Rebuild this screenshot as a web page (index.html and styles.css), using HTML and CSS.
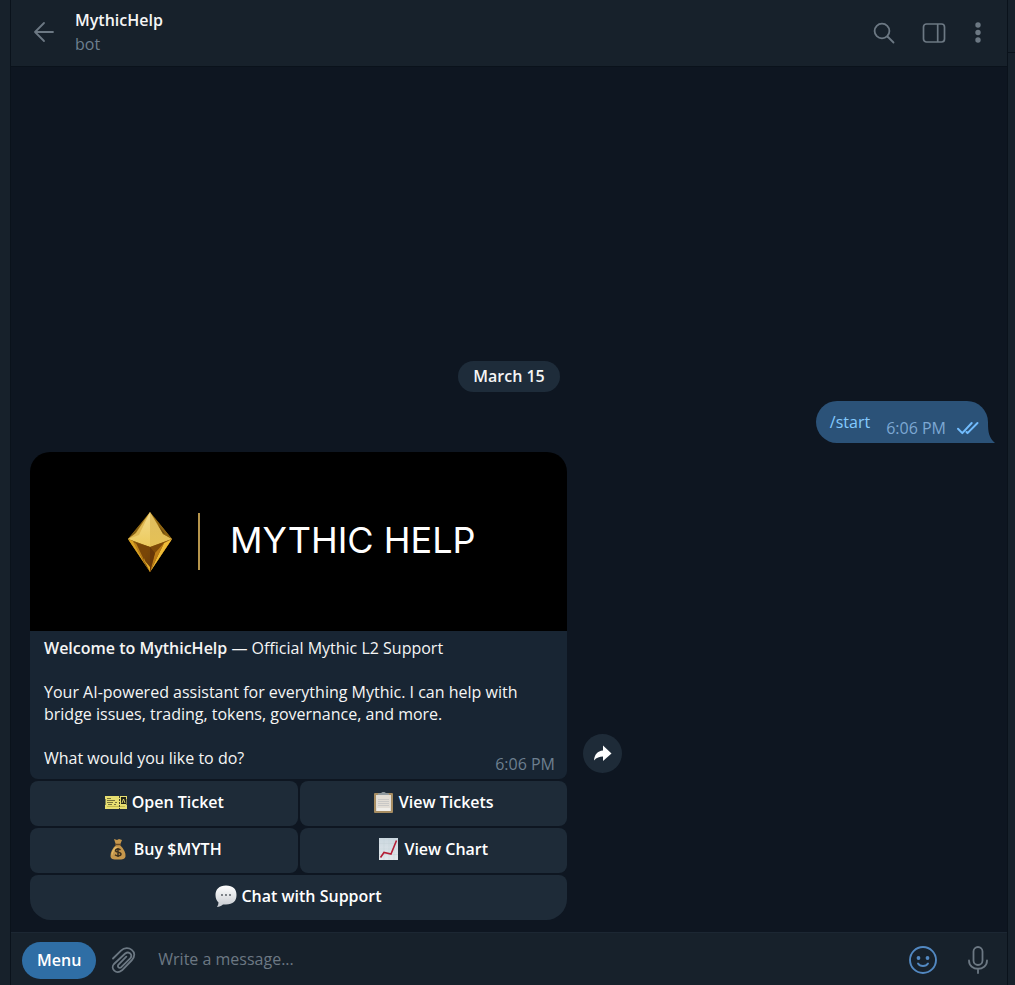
FILE: index.html
```html
<!DOCTYPE html>
<html lang="en">
<head>
<meta charset="utf-8">
<meta name="viewport" content="width=device-width, initial-scale=1">
<title>MythicHelp</title>
<link rel="stylesheet" href="styles.css">
</head>
<body>
<div class="app">
  <div class="side-left"></div>
  <section class="chat">
    <header class="topbar">
      <button class="icon-btn back" aria-label="Back">
        <svg width="24" height="24" viewBox="0 0 24 24" fill="none" stroke="currentColor" stroke-width="1.8" stroke-linecap="round" stroke-linejoin="round"><path d="M21 12H3M12 3L3 12l9 9"/></svg>
      </button>
      <div class="peer">
        <h1 class="peer-name">MythicHelp</h1>
        <span class="peer-status">bot</span>
      </div>
      <div class="tools">
        <button class="icon-btn" aria-label="Search">
          <svg width="24" height="24" viewBox="0 0 24 24" fill="none" stroke="currentColor" stroke-width="1.8" stroke-linecap="round"><circle cx="10" cy="10" r="7.4"/><path d="M15.5 15.5l6 6"/></svg>
        </button>
        <button class="icon-btn" aria-label="Toggle side panel">
          <svg width="24" height="24" viewBox="0 0 24 24" fill="none" stroke="currentColor" stroke-width="1.7"><rect x="1.5" y="3" width="21" height="18" rx="3"/><path d="M15.7 3v18"/></svg>
        </button>
        <button class="icon-btn" aria-label="More">
          <svg width="24" height="24" viewBox="0 0 24 24" fill="currentColor"><circle cx="12" cy="4" r="2.7"/><circle cx="12" cy="11.5" r="2.7"/><circle cx="12" cy="19" r="2.7"/></svg>
        </button>
      </div>
    </header>

    <main class="history">
      <div class="date">March 15</div>

      <div class="outgoing">
        <a class="command" href="#start">/start</a>
        <span class="meta">6:06 PM</span>
        <svg class="checks" width="24" height="16" viewBox="0 0 24 16" fill="none" stroke="currentColor" stroke-width="2" stroke-linecap="round" stroke-linejoin="round"><path d="M2 8.700l4.300 4.400L15.700 3M10.500 12l1 1.100L21.500 3"/></svg>
        <svg class="tail" width="14" height="20" viewBox="0 0 14 20" fill="currentColor"><path d="M0 0h7c0 9 1 15 7 20H0z"/></svg>
      </div>

      <div class="incoming">
        <article class="message">
          <div class="banner">
            <svg class="gem" width="46" height="62" viewBox="0 0 46 62">
              <defs>
                <linearGradient id="g1" x1="0" y1="0" x2="0" y2="1"><stop offset="0" stop-color="#f3db8c"/><stop offset="1" stop-color="#ecca5c"/></linearGradient>
                <linearGradient id="g2" x1="0" y1="0" x2="0" y2="1"><stop offset="0" stop-color="#dfbd60"/><stop offset="1" stop-color="#e5c155"/></linearGradient>
                <linearGradient id="g3" x1="0" y1="0" x2="1" y2="1"><stop offset="0" stop-color="#8f620e"/><stop offset="1" stop-color="#693706"/></linearGradient>
              </defs>
              <path fill="#a77b18" d="M23 1L1 28l22 33 22-33z"/>
              <path fill="#805c13" d="M17 9L7 24l-6 4z"/>
              <path fill="#dfb954" d="M23 1L9 22l-8 6 14-2z"/>
              <path fill="url(#g1)" d="M23 1L12 24 1 28l22 8z"/>
              <path fill="url(#g2)" d="M23 1v35l22-8-9-5z"/>
              <path fill="#8e6412" d="M27 6l9 17 9 5z"/>
              <path fill="#5f4310" d="M31 14l7 9-2-1z"/>
              <path fill="url(#g3)" d="M1 28l22 8v25z"/>
              <path fill="#7e4a08" d="M23 36l22-8-22 33z"/>
              <path fill="#d9a323" d="M1 28l5 2 12 23 5 8z"/>
              <path fill="#bc8118" d="M6 31l9 5 4 18z"/>
              <path fill="#794607" d="M9 32l14 4-6 13z"/>
              <path fill="#eebc37" d="M45 28l-8 4-14 29z"/>
              <path fill="#bc7c16" d="M37 32l-9 10-5 19z"/>
              <path fill="#683707" d="M23 36l5 6-5 19z"/>
              <path fill="#e3ae2c" d="M17 49l6 7v5z"/>
            </svg>
            <span class="rule"></span>
            <span class="brand">MYTHIC HELP</span>
          </div>
          <div class="body">
            <p><strong>Welcome to MythicHelp</strong> — Official Mythic L2 Support</p>
            <p>Your AI-powered assistant for everything Mythic. I can help with bridge issues, trading, tokens, governance, and more.</p>
            <p>What would you like to do?</p>
            <span class="meta stamp">6:06 PM</span>
          </div>
          <div class="keyboard">
            <button class="key">
              <svg width="24" height="22" viewBox="0 0 24 22"><path fill="#e6de70" d="M1 5h22v3l-1 1 1 1-1 1 1 1-1 1 1 1v4H1v-4l1-1-1-1 1-1-1-1 1-1-1-1z"/><path stroke="#77733a" d="M3 7.500h4M3 9.500h8M3 11.500h6M11 11.500h2M4 13.500h4M10 13.500h2"/><path stroke="#c3ba4c" d="M3 15.500h18"/><path stroke="#45452a" stroke-dasharray="2 1" d="M15.500 5v13"/><path fill="#202318" d="M17 6h5v7h-5z"/><path stroke="#d8d067" fill="none" d="M18 12l1.500-4 1.500 4"/></svg>
              Open Ticket</button>
            <button class="key">
              <svg width="22" height="22" viewBox="1 0 22 22"><rect x="2" y="2" width="19" height="20" rx="1" fill="#a68c61"/><path fill="#e2ddd5" d="M4 4h15v16H4z"/><path stroke="#c9c8c6" d="M6 8.500h11M6 10.500h11M6 12.500h11M6 14.500h11"/><path fill="#8f999f" d="M6 4V2.500l3-.5C10 .5 13 .5 14 2l3 .5V4z"/><path fill="#f0eee9" d="M5 17h13v3H5z"/></svg>
              View Tickets</button>
            <button class="key">
              <svg width="24" height="22" viewBox="0 0 24 22"><path fill="#c6974c" d="M8 1l3 1 2-1 3 1-2 5c4 4 6 8 5.500 11.500C19 21 17 21.500 12 21.500S4.500 21 4.500 18C4.500 14 6.500 10 10 7z"/><path fill="#e2b866" d="M9 9c-3 3-4 7-3 9 1-4 3-7 6-9z"/><path stroke="#684a24" stroke-width="1.500" d="M9 6.500h6"/><path fill="none" stroke="#3c301f" stroke-width="1.500" d="M14.500 11.800c-2-1.500-5-.8-5 .8 0 2.500 5.500 1 5.500 3.500 0 2-4 2.300-6 .6M12 10v9"/></svg>
              Buy $MYTH</button>
            <button class="key">
              <svg width="22" height="22" viewBox="1 0 22 22"><defs><linearGradient id="paper" x1="0" y1="0" x2="0" y2="1"><stop stop-color="#cbd7df"/><stop offset="1" stop-color="#e3e8ec"/></linearGradient></defs><path fill="url(#paper)" d="M2 0h19v22H2z"/><path stroke="#c3cfd7" stroke-width=".4" d="M2 5.500h19M2 11h19M2 16.500h19M7 0v22M12 0v22M17 0v22"/><path fill="none" stroke="#b51d35" stroke-width="1.600" d="M3.500 19.500L7 14.500l7 1.500 5.500-13.500"/></svg>
              View Chart</button>
            <button class="key wide">
              <svg width="22" height="22" viewBox="1 0 22 22"><defs><linearGradient id="cloud" x1="0" y1="0" x2="0" y2="1"><stop stop-color="#fff"/><stop offset="1" stop-color="#c7cbd0"/></linearGradient></defs><path fill="url(#cloud)" d="M12 .5c7 0 10.500 3.500 10.500 9.500s-3.500 9.500-10.500 9.500H9c-1.500 1.500-4 2.500-6 2.500 1-1.500 1.500-3 1.500-4.500C2.500 15.500 1.500 13 1.500 10 1.500 4.500 5 .5 12 .5z"/><g fill="#4c535a"><circle cx="8" cy="10" r=".9"/><circle cx="12" cy="10" r=".9"/><circle cx="16" cy="10" r=".9"/></g></svg>
              Chat with Support</button>
          </div>
        </article>
        <button class="share" aria-label="Share">
          <svg width="20" height="18" viewBox="0 0 20 18" fill="#fff"><path d="M10 .5l8.500 8-8.500 7.500v-4.500C6.500 11.500 3.500 12.500 1 15.500 1.500 9.500 4.500 6 10 5.500z"/></svg>
        </button>
      </div>
    </main>

    <footer class="composer">
      <button class="menu">Menu</button>
      <button class="icon-btn clip" aria-label="Attach file">
        <svg width="28" height="28" viewBox="0 0 28 28" fill="none" stroke="currentColor" stroke-width="1.800" stroke-linecap="round" stroke-linejoin="round"><path d="M3 12.500l8-7.800C18-2 29 6 22 14L12 24.300C6 29 0 22.500 4 18L15.200 7.500c4.300-3 7.800 1.800 5 4.800l-8.900 8.900c-2.300 1.600-4.300-.5-2.800-2.600l7.800-7.900"/></svg>
      </button>
      <input class="entry" type="text" placeholder="Write a message..." aria-label="Write a message">
      <button class="icon-btn emoji" aria-label="Emoji">
        <svg width="30" height="30" viewBox="0 0 30 30" fill="none" stroke="currentColor" stroke-width="1.900" stroke-linecap="round"><circle cx="15" cy="15" r="13"/><path d="M10 18.500c2 3.300 8 3.300 10 0"/><circle cx="10.500" cy="13" r="1.900" fill="currentColor" stroke="none"/><circle cx="19.500" cy="13" r="1.900" fill="currentColor" stroke="none"/></svg>
      </button>
      <button class="icon-btn" aria-label="Record voice message">
        <svg width="24" height="30" viewBox="0 0 24 30" fill="none" stroke="currentColor" stroke-width="1.800" stroke-linecap="round"><rect x="7.500" y="2" width="9" height="18" rx="4.500"/><path d="M3 15.500c0 11 18 11 18 0M12 24v4"/></svg>
      </button>
    </footer>
  </section>
  <aside class="side-right"><div class="side-head"></div></aside>
</div>
</body>
</html>
```
FILE: styles.css
```css
* { box-sizing: border-box; }
body {
  margin: 0;
  background: #0e1621;
  color: #f5f5f5;
  font: 16px/22px "Open Sans", "Noto Sans", sans-serif;
}
button, input { font: inherit; color: inherit; border: 0; margin: 0; padding: 0; background: none; }
button { cursor: pointer; }
svg { display: block; flex: none; }
h1, p { margin: 0; }

.app { display: flex; min-height: 100vh; }
.side-left { width: 10px; background: #17212b; }
.side-right { width: 8px; background: #17212b; border-left: 1px solid #0a121b; }
.side-head { height: 53px; border-bottom: 1px solid #0a121b; }
.chat {
  flex: 1;
  min-width: 0;
  display: flex;
  flex-direction: column;
  border-left: 1px solid #0a121b;
}

.topbar {
  display: flex;
  align-items: center;
  height: 67px;
  padding: 0 17px 0 21px;
  background: #17212b;
  border-bottom: 1px solid #0a121b;
}
.icon-btn { display: flex; color: #6c7883; }
.back { padding-bottom: 2px; }
.peer { flex: 1; margin-left: 19px; padding-bottom: 2px; }
.peer-name { font-size: 16px; line-height: 24px; font-weight: 600; }
.peer-status { display: block; line-height: 24px; color: #6d7f8f; }
.tools { display: flex; gap: 26px; }
.tools .icon-btn:last-child { margin-left: -6px; }

.history {
  flex: 1;
  display: flex;
  flex-direction: column;
  justify-content: flex-end;
  padding: 20px 19px 12px;
  background: #0e1621;
}
.date {
  align-self: center;
  padding: 4px 15px 5px;
  border-radius: 16px;
  background: #1e2c3a;
  font-weight: 600;
}
.outgoing {
  position: relative;
  align-self: flex-end;
  display: flex;
  align-items: flex-end;
  height: 42px;
  margin-top: 9px;
  padding: 0 8px 5px 14px;
  border-radius: 21px 21px 0 21px;
  background: #2b5278;
}
.command { margin: 0 16px 5px 0; color: #83caff; text-decoration: none; }
.meta { line-height: 20px; color: #6d7f8f; }
.outgoing .meta { color: #7da8d3; }
.checks { margin: 0 0 2px 10px; color: #72bcfd; }
.tail { position: absolute; right: -7px; bottom: 0; color: #2b5278; }

.incoming { display: flex; align-items: flex-end; margin-top: 9px; gap: 16px; }
.message { width: 537px; }
.banner {
  display: flex;
  align-items: center;
  height: 179px;
  padding: 1px 0 0 97px;
  border-radius: 20px 20px 0 0;
  background: #000;
}
.rule { width: 2px; height: 57px; margin: 0 30px 2px 25px; background: #b5944b; }
.brand { padding-bottom: 4px; color: #fff; font: 36px/44px Inter, sans-serif; }
.body {
  position: relative;
  padding: 6px 14px 10px;
  border-radius: 0 0 8px 8px;
  background: #182533;
}
.body p + p { margin-top: 22px; }
.body strong { font-weight: 600; }
.stamp { position: absolute; right: 12px; bottom: 5px; }
.keyboard { display: grid; grid-template-columns: 1fr 1fr; gap: 2px; margin-top: 2px; }
.key {
  display: flex;
  align-items: center;
  justify-content: center;
  gap: 4px;
  height: 45px;
  padding-bottom: 3px;
  border-radius: 8px;
  background: #1e2b38;
  color: #fff;
  font-weight: 600;
}
.wide { grid-column: 1 / -1; border-radius: 8px 8px 21px 21px; }
.share {
  display: flex;
  align-items: center;
  justify-content: center;
  width: 39px;
  height: 39px;
  margin-bottom: 147px;
  border-radius: 50%;
  background: #1e2b38;
}

.composer {
  display: flex;
  align-items: center;
  height: 53px;
  padding: 2px 17px 0 11px;
  background: #17212b;
  border-top: 1px solid #1c2733;
}
.menu { height: 37px; padding: 0 15px 1px; border-radius: 19px; background: #2f6ea5; color: #fff; font-weight: 600; }
.clip { margin: 0 20px 0 14px; }
.entry { flex: 1; min-width: 0; height: 36px; padding-bottom: 2px; outline: none; }
.entry::placeholder { color: #6c7883; opacity: 1; }
.emoji { margin-right: 28px; color: #5288c1; }
```
